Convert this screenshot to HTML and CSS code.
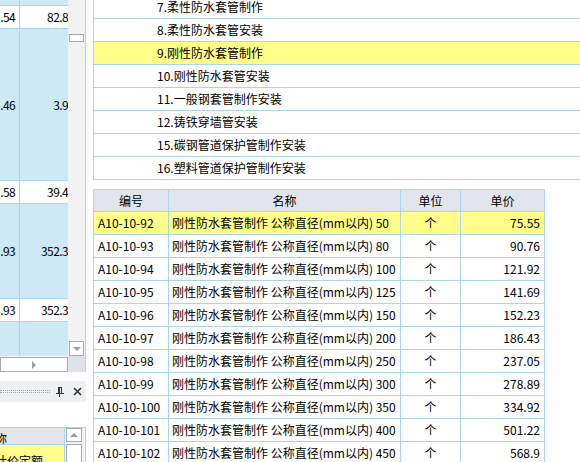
FILE: index.html
```html
<!DOCTYPE html>
<html lang="zh-CN">
<head>
<meta charset="utf-8">
<title>定额</title>
<link rel="stylesheet" href="styles.css">
</head>
<body>
<div class="app">
  <aside class="left">
    <div class="pane">
      <div class="lgrid">
        <div class="lrow blue h6"><div class="lcell"></div><div class="lcell"></div></div>
        <div class="lrow white h23"><div class="lcell">.54</div><div class="lcell">82.8</div></div>
        <div class="lrow blue h152"><div class="lcell">.46</div><div class="lcell">3.9</div></div>
        <div class="lrow white h23"><div class="lcell">.58</div><div class="lcell">39.4</div></div>
        <div class="lrow blue h95"><div class="lcell">.93</div><div class="lcell">352.3</div></div>
        <div class="lrow white h23"><div class="lcell">.93</div><div class="lcell">352.3</div></div>
        <div class="lrow blue rest"><div class="lcell"></div><div class="lcell"></div></div>
      </div>
      <div class="vscroll">
        <div class="thumb"></div>
        <div class="sbtn down"><span class="tri-down"></span></div>
      </div>
      <div class="hscroll">
        <div class="sbtn right"><span class="tri-right"></span></div>
      </div>
      <div class="corner"></div>
    </div>

    <div class="titlebar">
      <div class="gripper"></div>
      <svg class="pin" width="8" height="10" viewBox="0 0 8 10">
        <rect x="2.5" y="0.5" width="3" height="6" fill="none" stroke="#333" stroke-width="1"/>
        <rect x="2" y="0" width="2" height="7" fill="#333"/>
        <rect x="0" y="6" width="8" height="1" fill="#333"/>
        <rect x="3" y="7" width="1" height="3" fill="#333"/>
      </svg>
      <svg class="close" width="9" height="9" viewBox="0 0 9 9">
        <path d="M1 1 L8 8 M8 1 L1 8" stroke="#333" stroke-width="1.6" fill="none"/>
      </svg>
    </div>

    <div class="bgrid">
      <div class="bcontent">
        <div class="bhead"><span class="bhead-text">名称</span></div>
        <div class="brow sel"><span class="brow-text">计价定额</span></div>
      </div>
      <div class="bscroll">
        <div class="sbtn up"><span class="tri-up"></span></div>
        <div class="bthumb"></div>
      </div>
    </div>
  </aside>

  <div class="gap"></div>

  <main class="right">
    <div class="list">
      <div class="list-inner">
        <div class="item">7.柔性防水套管制作</div>
        <div class="item">8.柔性防水套管安装</div>
        <div class="item sel">9.刚性防水套管制作</div>
        <div class="item">10.刚性防水套管安装</div>
        <div class="item">11.一般钢套管制作安装</div>
        <div class="item">12.铸铁穿墙管安装</div>
        <div class="item">15.碳钢管道保护管制作安装</div>
        <div class="item">16.塑料管道保护管制作安装</div>
      </div>
    </div>

    <div class="table">
      <div class="trow thead">
        <div class="tcell">编号</div>
        <div class="tcell">名称</div>
        <div class="tcell">单位</div>
        <div class="tcell">单价</div>
      </div>
      <div class="trow sel">
        <div class="tcell c-code">A10-10-92</div>
        <div class="tcell c-name">刚性防水套管制作 公称直径(mm以内) 50</div>
        <div class="tcell c-unit">个</div>
        <div class="tcell c-price">75.55</div>
      </div>
      <div class="trow">
        <div class="tcell c-code">A10-10-93</div>
        <div class="tcell c-name">刚性防水套管制作 公称直径(mm以内) 80</div>
        <div class="tcell c-unit">个</div>
        <div class="tcell c-price">90.76</div>
      </div>
      <div class="trow">
        <div class="tcell c-code">A10-10-94</div>
        <div class="tcell c-name">刚性防水套管制作 公称直径(mm以内) 100</div>
        <div class="tcell c-unit">个</div>
        <div class="tcell c-price">121.92</div>
      </div>
      <div class="trow">
        <div class="tcell c-code">A10-10-95</div>
        <div class="tcell c-name">刚性防水套管制作 公称直径(mm以内) 125</div>
        <div class="tcell c-unit">个</div>
        <div class="tcell c-price">141.69</div>
      </div>
      <div class="trow">
        <div class="tcell c-code">A10-10-96</div>
        <div class="tcell c-name">刚性防水套管制作 公称直径(mm以内) 150</div>
        <div class="tcell c-unit">个</div>
        <div class="tcell c-price">152.23</div>
      </div>
      <div class="trow">
        <div class="tcell c-code">A10-10-97</div>
        <div class="tcell c-name">刚性防水套管制作 公称直径(mm以内) 200</div>
        <div class="tcell c-unit">个</div>
        <div class="tcell c-price">186.43</div>
      </div>
      <div class="trow">
        <div class="tcell c-code">A10-10-98</div>
        <div class="tcell c-name">刚性防水套管制作 公称直径(mm以内) 250</div>
        <div class="tcell c-unit">个</div>
        <div class="tcell c-price">237.05</div>
      </div>
      <div class="trow">
        <div class="tcell c-code">A10-10-99</div>
        <div class="tcell c-name">刚性防水套管制作 公称直径(mm以内) 300</div>
        <div class="tcell c-unit">个</div>
        <div class="tcell c-price">278.89</div>
      </div>
      <div class="trow">
        <div class="tcell c-code">A10-10-100</div>
        <div class="tcell c-name">刚性防水套管制作 公称直径(mm以内) 350</div>
        <div class="tcell c-unit">个</div>
        <div class="tcell c-price">334.92</div>
      </div>
      <div class="trow">
        <div class="tcell c-code">A10-10-101</div>
        <div class="tcell c-name">刚性防水套管制作 公称直径(mm以内) 400</div>
        <div class="tcell c-unit">个</div>
        <div class="tcell c-price">501.22</div>
      </div>
      <div class="trow">
        <div class="tcell c-code">A10-10-102</div>
        <div class="tcell c-name">刚性防水套管制作 公称直径(mm以内) 450</div>
        <div class="tcell c-unit">个</div>
        <div class="tcell c-price">568.9</div>
      </div>
    </div>
  </main>
</div>
</body>
</html>
```

FILE: styles.css
```css
:root {
  --line: #a9d5f3;
  --blue: #cde9f6;
  --yellow: #ffff8a;
  --head: #e1e4ea;
  --track: #f2f2f2;
  --btn-border: #a9a9a9;
}
* { box-sizing: border-box; margin: 0; padding: 0; }
html, body { width: 580px; height: 462px; overflow: hidden; background: #fff; }
body {
  font-family: "Noto Sans CJK SC", "Microsoft YaHei", sans-serif;
  font-size: 12px;
  color: #000;
}
.app { display: flex; height: 462px; }
.left { width: 86px; flex: none; display: flex; flex-direction: column; }
.gap { width: 7px; flex: none; }
.right { flex: 1; min-width: 0; display: flex; flex-direction: column; }

/* ---------- left top grid ---------- */
.pane {
  display: grid;
  grid-template-columns: 68px 17px;
  grid-template-rows: 356px 16px;
  width: 86px;
  height: 372px;
  border-right: 1px solid var(--line);
  flex: none;
}
.lgrid { overflow: hidden; display: flex; flex-direction: column; }
.lrow {
  display: grid;
  grid-template-columns: 20px 52px;
  border-bottom: 1px solid var(--line);
  flex: none;
}
.lrow.blue { background: var(--blue); }
.lrow.white { background: #fff; }
.h6 { height: 6px; }
.h23 { height: 23px; }
.h152 { height: 152px; }
.h95 { height: 95px; }
.lrow.rest { flex: 1; border-bottom: none; }
.lcell {
  display: flex;
  align-items: center;
  justify-content: flex-end;
  overflow: hidden;
  white-space: nowrap;
  padding-right: 4px;
  line-height: 16px;
  letter-spacing: -0.6px;
}
.lcell:first-child { border-right: 1px solid var(--line); padding-right: 4px; }

.vscroll { background: var(--track); display: flex; flex-direction: column; }
.thumb {
  margin: 34px 0 0 1px;
  width: 15px; height: 8px;
  border: 1px solid var(--btn-border);
  background: #fff;
}
.sbtn {
  width: 15px; height: 15px;
  border: 1px solid var(--btn-border);
  background: #fff;
  display: flex; align-items: center; justify-content: center;
}
.sbtn.down { margin: auto 0 0 1px; }
.hscroll { background: var(--track); display: flex; justify-content: flex-end; align-items: flex-start; }
.sbtn.right { width: 16px; height: 15px; margin-top: 1px; }
.corner { background: #dfe2e8; }

.tri-down { width: 0; height: 0; border-left: 4px solid transparent; border-right: 4px solid transparent; border-top: 4px solid #9c9c9c; }
.tri-up { width: 0; height: 0; border-left: 4px solid transparent; border-right: 4px solid transparent; border-bottom: 4px solid #9c9c9c; }
.tri-right { width: 0; height: 0; border-top: 4px solid transparent; border-bottom: 4px solid transparent; border-left: 4px solid #9c9c9c; }

/* ---------- title bar ---------- */
.titlebar {
  margin-top: 9px;
  height: 21px;
  width: 86px;
  background: #eeeff2;
  display: flex;
  align-items: center;
  flex: none;
}
.gripper {
  width: 50px; height: 3px;
  border-top: 1px dotted #a6a6a6;
  border-bottom: 1px dotted #a6a6a6;
  flex: none;
}
.pin { margin-left: 6px; flex: none; }
.close { margin-left: 9px; flex: none; }

/* ---------- left bottom grid ---------- */
.bgrid {
  margin-top: 25px;
  width: 86px;
  flex: 1;
  border-top: 1px solid var(--line);
  border-right: 1px solid var(--line);
  display: grid;
  grid-template-columns: 65px 20px;
  min-height: 0;
}
.bcontent { overflow: hidden; border-right: 1px solid var(--line); }
.bhead {
  height: 17px;
  background: var(--head);
  border-bottom: 1px solid var(--line);
  display: flex;
  justify-content: center;
  margin-left: -74px;
  width: 138px;
  padding-top: 3px;
  line-height: 16px;
  white-space: nowrap;
  overflow: hidden;
}
.brow {
  height: 23px;
  line-height: 16px;
  padding-top: 8px;
  white-space: nowrap;
}
.brow-text { display: inline-block; margin-left: -5px; }
.brow.sel { background: var(--yellow); }
.bscroll { background: var(--track); display: flex; flex-direction: column; align-items: flex-start; }
.sbtn.up { width: 16px; height: 14px; margin: 0 0 0 1px; }
.bthumb {
  margin: 2px 0 0 1px;
  width: 16px; height: 30px;
  border: 1px solid var(--btn-border);
  background: #fff;
}

/* ---------- top list ---------- */
.list {
  height: 180px;
  border-left: 1px solid var(--line);
  overflow: hidden;
  flex: none;
}
.list-inner { margin-top: -4px; }
.item {
  height: 23px;
  line-height: 22px;
  border-bottom: 1px solid var(--line);
  padding-left: 63px;
  white-space: nowrap;
}
.item.sel { background: var(--yellow); }

/* ---------- table ---------- */
.table {
  margin-top: 9px;
  width: 452px;
  border-left: 1px solid var(--line);
  border-top: 1px solid var(--line);
  flex: none;
}
.trow { display: grid; grid-template-columns: 75px 232px 60px 84px; }
.trow.sel { background: var(--yellow); }
.tcell {
  height: 23px;
  line-height: 22px;
  border-right: 1px solid var(--line);
  border-bottom: 1px solid var(--line);
  padding: 0 4px;
  white-space: nowrap;
  overflow: hidden;
}
.thead .tcell {
  height: 22px;
  line-height: 21px;
  background: var(--head);
  text-align: center;
}
.c-name { padding-left: 3px; }
.c-unit { text-align: center; }
.c-price { text-align: right; }
```
